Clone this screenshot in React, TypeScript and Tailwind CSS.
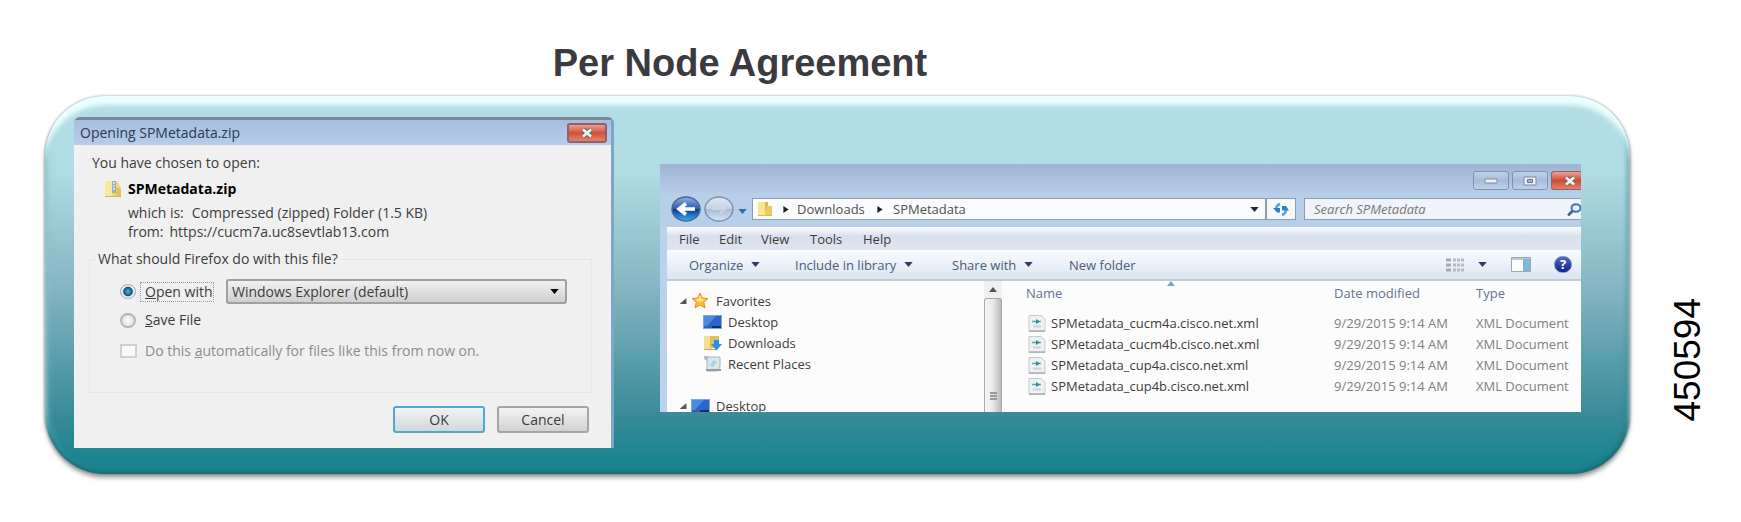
import type { ReactNode } from "react"

const files = [
    "SPMetadata_cucm4a.cisco.net.xml",
    "SPMetadata_cucm4b.cisco.net.xml",
    "SPMetadata_cup4a.cisco.net.xml",
    "SPMetadata_cup4b.cisco.net.xml",
]

const Caret = ({ className = "text-[#2c3f5c]" }: { className?: string }) => (
    <svg width="9" height="5" viewBox="0 0 10 6" className={className} aria-hidden="true">
        <path d="M0 0h10L5 6z" fill="currentColor" />
    </svg>
)

const Crumb = () => (
    <svg width="6" height="7" viewBox="0 0 6 8" aria-hidden="true">
        <path d="M0 0v8l6-4z" fill="#222" />
    </svg>
)

const Expanded = () => (
    <svg width="8" height="6" viewBox="0 0 8 7" aria-hidden="true">
        <path d="M8 0v7H0z" fill="#555" />
    </svg>
)

const CloseX = () => (
    <svg width="14" height="10" viewBox="0 0 14 10" aria-hidden="true">
        <path d="M3 1.5l8 7M11 1.5l-8 7" stroke="#7b6a6e" strokeWidth="5" />
        <path d="M3 1.5l8 7M11 1.5l-8 7" stroke="#f4f4f4" strokeWidth="2.6" />
    </svg>
)

const ZipIcon = () => (
    <svg width="18" height="18" viewBox="0 0 18 18" aria-hidden="true">
        <path d="M1 1h12l4 7v9H1z" fill="#efd77f" />
        <path d="M1 1h7v16H1z" fill="#f8e9a0" />
        <path d="M8 1h4v12H8z" fill="#a4adb4" />
        <path d="M9 3h2M9 6h2M9 9h2" stroke="#e8edf2" strokeWidth="1.5" />
        <path d="M12 8h5v9h-5z" fill="#e3c15c" />
        <path d="M1 16.5h16" stroke="#d6b452" />
    </svg>
)

const FolderIcon = () => (
    <svg width="16" height="16" viewBox="0 0 16 16" aria-hidden="true">
        <path d="M1 1h8v14H1z" fill="#f8e491" />
        <path d="M8 1h3v10H8z" fill="#d5b860" />
        <path d="M10 5h5v10H8v-4z" fill="#eccb5f" />
        <path d="M1 14.5h14" stroke="#dcbb4b" />
    </svg>
)

const DesktopIcon = () => (
    <svg width="19" height="14" viewBox="0 0 19 14" aria-hidden="true">
        <path d="M0 0h19v14H0z" fill="#7ba7d9" />
        <path d="M1 1h17v10H1z" fill="#2b66c8" />
        <path d="M1 1h12L4 11H1z" fill="#4b8be4" />
        <path d="M1 11h17v2H1z" fill="#2f62b0" />
        <path d="M9 11h9v2H9z" fill="#16305e" />
    </svg>
)

const StarIcon = () => (
    <svg width="18" height="17" viewBox="0 0 18 17" aria-hidden="true">
        <path d="M9 1l2.3 5 5.7.6-4.3 3.7 1.4 5.7L9 13l-5.100 3 1.400-5.700L1 6.600l5.700-.6z" fill="#fbc02e" stroke="#f08a24" />
        <path d="M9 3.500l1.500 3.500 3.500.500-5 2.500-4.500-2.500 3-.500z" fill="#ffe98a" />
    </svg>
)

const DownloadsIcon = () => (
    <svg width="19" height="16" viewBox="0 0 19 16" aria-hidden="true">
        <path d="M1 1h8v14H1z" fill="#f5df8c" />
        <path d="M7 1h9v12H7z" fill="#dcbf66" />
        <path d="M1 14.500h12" stroke="#cdaa45" />
        <path d="M11 5h5v4h3l-5.500 6.500L8 9h3z" fill="#2e8fdc" />
    </svg>
)

const RecentIcon = () => (
    <svg width="19" height="17" viewBox="0 0 19 17" aria-hidden="true">
        <path d="M1 1h4l2 3v4L1 4z" fill="#b8bfc6" />
        <path d="M4 2h13v10l-3 4H4z" fill="#dde5ea" stroke="#aab3bb" />
        <path d="M7 10l4-5 3 2-4 5z" fill="#9ad3ec" />
        <path d="M3 15h15" stroke="#929aa2" strokeWidth="2" />
    </svg>
)

const XmlIcon = () => (
    <svg width="18" height="17" viewBox="0 0 18 17" aria-hidden="true">
        <path d="M1 .5h12l4 3.500v12.500H1z" fill="#eef1f2" stroke="#c5cacd" />
        <path d="M1 16h16" stroke="#a9aeb1" strokeWidth="1.500" />
        <path d="M4 6.500h9" stroke="#5fa9ad" strokeWidth="1.500" />
        <path d="M8 4l4 2.500L8 9z" fill="#2b8f96" />
        <path d="M5 11.500h8" stroke="#ccd2d5" strokeWidth="2" />
    </svg>
)

const BackIcon = () => (
    <svg width="30" height="26" viewBox="0 0 30 26" aria-hidden="true">
        <defs>
            <linearGradient id="back" x1="0" y1="0" x2="0" y2="1">
                <stop offset="0" stopColor="#8fb2e4" />
                <stop offset=".48" stopColor="#2c5cb4" />
                <stop offset=".52" stopColor="#0d3b94" />
                <stop offset="1" stopColor="#35b4f4" />
            </linearGradient>
        </defs>
        <ellipse cx="15" cy="13" rx="14" ry="12" fill="url(#back)" stroke="#4a6590" strokeWidth="1.500" />
        <path d="M24 13H10M15 7.500L8 13l7 5.500" fill="none" stroke="#fff" strokeWidth="3.500" />
    </svg>
)

const ForwardIcon = () => (
    <svg width="30" height="26" viewBox="0 0 30 26" aria-hidden="true">
        <defs>
            <linearGradient id="forward" x1="0" y1="0" x2="0" y2="1">
                <stop offset="0" stopColor="#dfe8f3" />
                <stop offset=".5" stopColor="#c3d1e3" />
                <stop offset=".52" stopColor="#a9bcd5" />
                <stop offset="1" stopColor="#d8e5f3" />
            </linearGradient>
        </defs>
        <ellipse cx="15" cy="13" rx="14" ry="12" fill="url(#forward)" stroke="#7e90aa" strokeWidth="1.500" />
        <path d="M8 13h12M16 9l5 4-5 4" fill="none" stroke="#cbd8e8" strokeWidth="2" />
    </svg>
)

const DialogButton = ({ children, primary }: { children: ReactNode; primary?: boolean }) => (
    <button
        className={
            primary
                ? "h-[27px] w-[92px] rounded-[3px] border-2 border-[#4fa9cf] bg-linear-to-b from-[#f1f3f4] to-[#d3d7d9]"
                : "h-[27px] w-[92px] rounded-[3px] border-2 border-[#a5a5a5] bg-linear-to-b from-[#f3f3f3] to-[#d2d2d2]"
        }
    >
        <span className="block leading-5">{children}</span>
    </button>
)

const OpeningDialog = () => {
    return (
        <section className="w-[540px] shrink-0 rounded-t-md border-t-[3px] border-r-[3px] border-t-[#7c8792] border-r-[#79a9c6] bg-[#f0f0f0] text-sm leading-5 text-[#3c3c3c]">
            <header className="flex h-[25px] items-center justify-between bg-linear-to-b from-[#a6bddb] to-[#b7cdea] pr-1 pl-1.5">
                <h2 className="text-[#2c3950]">Opening SPMetadata.zip</h2>
                <button aria-label="Close" className="flex h-5 w-10 items-center justify-center rounded-[3px] border-2 border-[#93606a] bg-linear-to-b from-[#e8a093] via-[#d0513a] to-[#dd8568]">
                    <CloseX />
                </button>
            </header>
            <div className="px-[15px] pt-2 pb-[15px]">
                <p className="pl-[3px]">You have chosen to open:</p>
                <div className="mt-1 flex h-6 items-center gap-1.5 pl-[15px]">
                    <ZipIcon />
                    <strong className="text-black">SPMetadata.zip</strong>
                </div>
                <div className="mt-0.5 pl-[39px] leading-[19px]">
                    <p className="flex gap-2"><span>which is:</span><span>Compressed (zipped) Folder (1.5 KB)</span></p>
                    <p className="flex gap-1.5"><span>from:</span><span>https://cucm7a.uc8sevtlab13.com</span></p>
                </div>
                <fieldset className="mt-2 mr-1 border border-[#e6e6e6] pb-[31px] pl-[30px]">
                    <legend className="-ml-6 px-0.5">What should Firefox do with this file?</legend>
                    <div className="mt-2.5 flex h-[25px] items-center">
                        <input type="radio" id="open" name="action" defaultChecked className="h-[15px] w-4 appearance-none rounded-full border border-[#a3adb5] bg-[radial-gradient(circle,#4fb4e8_0,#17517f_45%,#e4eaee_55%)]" />
                        <label htmlFor="open" className="ml-1 w-[74px] border border-dotted border-[#999] pl-1 leading-[18px] whitespace-nowrap"><u>O</u>pen with</label>
                        <div className="relative ml-3 w-[341px]">
                            <select aria-label="Application" className="block h-[25px] w-full appearance-none rounded-[3px] border-2 border-[#a0a0a0] bg-linear-to-b from-[#f1f1f1] to-[#cfcfcf] pl-1 leading-5">
                                <option>Windows Explorer (default)</option>
                            </select>
                            <span className="pointer-events-none absolute inset-y-0 right-2 flex items-center"><Caret className="text-black" /></span>
                        </div>
                    </div>
                    <div className="mt-1.5 flex items-center">
                        <input type="radio" id="save" name="action" className="h-[15px] w-4 appearance-none rounded-full border-2 border-[#b5b5b5] bg-[radial-gradient(circle,#fff,#d5d5d5)]" />
                        <label htmlFor="save" className="pl-[9px]"><u>S</u>ave File</label>
                    </div>
                    <div className="mt-[11px] flex items-center text-[#8c8c8c]">
                        <input type="checkbox" id="auto" disabled className="h-3.5 w-[17px] appearance-none border-2 border-[#d0d0d0] bg-[#f9f9f9]" />
                        <label htmlFor="auto" className="pl-2">Do this <u>a</u>utomatically for files like this from now on.</label>
                    </div>
                </fieldset>
                <div className="mt-[13px] mr-[7px] flex justify-end gap-3">
                    <DialogButton primary>OK</DialogButton>
                    <DialogButton>Cancel</DialogButton>
                </div>
            </div>
        </section>
    )
}

const AddressBar = () => (
    <div className="flex h-[31px] items-start">
        <button aria-label="Back"><BackIcon /></button>
        <button aria-label="Forward" className="ml-[3px]"><ForwardIcon /></button>
        <button aria-label="Recent pages" className="ml-1 self-center"><Caret className="text-[#2f6fa8]" /></button>
        <nav className="mt-0.5 ml-[5px] flex h-[22px] flex-1 items-center border border-[#8e9db0] bg-[#fafbfc] pl-1 text-[#505050]">
            <FolderIcon />
            <span className="ml-2.5"><Crumb /></span>
            <a href="#downloads" className="ml-2 w-[76px]">Downloads</a>
            <span className="ml-1"><Crumb /></span>
            <a href="#spmetadata" className="ml-2.5">SPMetadata</a>
            <button aria-label="Previous locations" className="mr-1.5 ml-auto"><Caret className="text-[#232342]" /></button>
        </nav>
        <button aria-label="Refresh" className="mt-0.5 flex h-[22px] w-[30px] items-center justify-center border border-[#8e9db0] bg-[#f5f8fb]">
            <svg width="18" height="14" viewBox="0 0 18 14" aria-hidden="true">
                <path d="M4 8c0-3 1-5 4-6M14 7c0 3-1 5-4 6" fill="none" stroke="#5ba0d4" strokeWidth="2.500" />
                <path d="M1 6h7v4.500H5zM10 8.500h7L14 4h-4z" fill="#357fc0" />
            </svg>
        </button>
        <div className="mt-0.5 ml-2 flex h-[22px] w-[277px] items-center border border-r-0 border-[#8e9db0] bg-[#f0f3f8]">
            <input aria-label="Search" placeholder="Search SPMetadata" className="min-w-0 flex-1 pl-[9px] italic outline-none placeholder:text-[#777]" />
            <svg width="14" height="13" viewBox="0 0 14 13" aria-hidden="true">
                <ellipse cx="9" cy="5" rx="4.500" ry="3.800" fill="#e3f0fa" stroke="#3c78b5" strokeWidth="2" />
                <path d="M5.500 8L1 12.500" stroke="#3c5f95" strokeWidth="2.500" />
            </svg>
        </div>
    </div>
)

const Explorer = () => {
    return (
        <section className="mt-[47px] flex h-[248px] min-w-0 flex-1 flex-col overflow-hidden bg-[#bcd2ec] pl-[7px] text-[13px] leading-5 text-[#3c3c3c]">
            <div className="-ml-[7px] bg-linear-to-b from-[#9fb4d1] to-[#b8cfea] to-50% pl-[11px]">
                <div className="flex h-8 justify-end gap-[3px] pt-[7px]">
                    <button aria-label="Minimize" className="flex h-[19px] w-9 items-center justify-center rounded-[3px] border border-[#7f94b0] bg-linear-to-b from-[#c0d2e8] via-[#a5bddb] to-[#bcd2ea]">
                        <svg width="14" height="6" viewBox="0 0 14 6" aria-hidden="true"><path d="M1 1h12v4H1z" fill="#eef2f6" stroke="#7c899b" /></svg>
                    </button>
                    <button aria-label="Maximize" className="flex h-[19px] w-9 items-center justify-center rounded-[3px] border border-[#7f94b0] bg-linear-to-b from-[#c0d2e8] via-[#a5bddb] to-[#bcd2ea]">
                        <svg width="14" height="10" viewBox="0 0 14 10" aria-hidden="true">
                            <path d="M1 1h12v8H1z" fill="#eef2f6" stroke="#7c899b" />
                            <path d="M4.500 3.500h5v3h-5z" fill="#9db6d3" stroke="#66758b" />
                        </svg>
                    </button>
                    <button aria-label="Close window" className="flex h-[19px] w-[30px] items-center justify-center rounded-l-[3px] border border-r-0 border-[#93606a] bg-linear-to-b from-[#e8a093] via-[#cc4a34] to-[#dd8568] pl-1.5">
                        <CloseX />
                    </button>
                </div>
                <AddressBar />
            </div>
            <div className="flex h-[23px] shrink-0 items-center bg-linear-to-b from-white via-[#d9e0ec] via-40% to-[#dfe4f0] pl-3">
                <button className="w-10 text-left">File</button>
                <button className="w-[42px] text-left">Edit</button>
                <button className="w-[49px] text-left">View</button>
                <button className="w-[53px] text-left">Tools</button>
                <button>Help</button>
            </div>
            <div className="flex h-[31px] shrink-0 items-center border-b-2 border-[#c0ccda] bg-linear-to-b from-[#fafcfe] via-[#eaf1f9] to-[#dbe5f0] pl-[22px] text-[#4c5b76]">
                <button className="flex w-[106px] items-center gap-2">Organize <Caret /></button>
                <button className="flex w-[157px] items-center gap-2">Include in library <Caret /></button>
                <button className="flex w-[117px] items-center gap-2">Share with <Caret /></button>
                <button>New folder</button>
                <button aria-label="Change view" className="ml-auto flex items-center gap-3.5">
                    <svg width="18" height="14" viewBox="0 0 18 14" aria-hidden="true">
                        <path d="M0 2h5M0 7h5M0 12h5" stroke="#a3aab3" strokeWidth="3" />
                        <path d="M7 2h11M7 7h11M7 12h11" stroke="#b4bbc4" strokeWidth="3" strokeDasharray="3 1" />
                    </svg>
                    <Caret />
                </button>
                <button aria-label="Preview pane" className="ml-6">
                    <svg width="20" height="15" viewBox="0 0 20 15" aria-hidden="true">
                        <path d="M.5 .5h19v14H.5z" fill="#fff" stroke="#9aa7b6" />
                        <path d="M1 1h18v2H1z" fill="#b9c6d4" />
                        <path d="M12 2h7v12h-7z" fill="#7db9d8" />
                    </svg>
                </button>
                <button aria-label="Help" className="mr-[9px] ml-[23px] flex h-[17px] w-[18px] items-center justify-center rounded-full border border-[#7185b5] bg-linear-to-b from-[#5069c0] to-[#0d1f8c] leading-none font-bold text-white">?</button>
            </div>
            <div className="flex flex-1 bg-[#fcfcfc]">
                <nav className="w-[317px] shrink-0 pt-[9px] pl-3">
                    <a href="#favorites" className="flex h-[21px] items-center gap-1"><Expanded /><StarIcon /><span className="pl-[3px]">Favorites</span></a>
                    <a href="#desktop" className="flex h-[21px] items-center gap-1.5 pl-6"><DesktopIcon />Desktop</a>
                    <a href="#downloads" className="flex h-[21px] items-center gap-1.5 pl-6"><DownloadsIcon />Downloads</a>
                    <a href="#recent" className="flex h-[21px] items-center gap-1.5 pl-6"><RecentIcon />Recent Places</a>
                    <a href="#computer" className="mt-[21px] flex h-[21px] items-center gap-1"><Expanded /><DesktopIcon /><span className="pl-0.5">Desktop</span></a>
                </nav>
                <div className="flex w-[18px] shrink-0 flex-col items-center bg-[#f0f0f0]">
                    <svg width="8" height="5" viewBox="0 0 8 5" className="my-[6px]" aria-hidden="true"><path d="M0 5h8L4 0z" fill="#555" /></svg>
                    <div className="flex w-full flex-1 flex-col items-center justify-end gap-px rounded-t-[3px] border border-b-0 border-[#aaa] bg-linear-to-r from-[#f5f5f5] via-[#e8e8e8] to-[#b9b9b9] pb-4">
                        <i className="h-0.5 w-[7px] bg-[#999]" />
                        <i className="h-0.5 w-[7px] bg-[#999]" />
                        <i className="h-0.5 w-[7px] bg-[#999]" />
                    </div>
                </div>
                <div className="relative min-w-0 flex-1">
                    <svg width="8" height="5" viewBox="0 0 8 5" className="absolute top-0 left-[165px]" aria-hidden="true"><path d="M0 5h8L4 0z" fill="#7ba3c4" /></svg>
                    <table className="w-full table-fixed text-left whitespace-nowrap">
                        <thead className="text-[#64748f]">
                            <tr className="h-8 align-top leading-6">
                                <th className="pl-6 font-normal">Name</th>
                                <th className="w-[142px] pl-2 font-normal">Date modified</th>
                                <th className="w-[113px] pl-2 font-normal">Type</th>
                            </tr>
                        </thead>
                        <tbody className="text-[#808080]">
                            {files.map((file) => (
                                <tr key={file} className="h-[21px] leading-[21px]">
                                    <td className="pl-[26px] text-[#3c3c3c]"><span className="flex items-center gap-[5px]"><XmlIcon />{file}</span></td>
                                    <td className="pl-2">9/29/2015 9:14 AM</td>
                                    <td className="pl-2">XML Document</td>
                                </tr>
                            ))}
                        </tbody>
                    </table>
                </div>
            </div>
        </section>
    )
}

const App = () => {
    return (
        <main className="flex bg-white pt-[41px] pb-12 pl-[45px] font-['Open_Sans',sans-serif]">
            <div className="min-w-0 flex-1">
                <h1 className="mr-[195px] text-center font-['Liberation_Sans',sans-serif] text-[38px] leading-[44px] font-bold text-[#3b3b3f]">Per Node Agreement</h1>
                <div className="mt-[11px] flex items-start gap-[46px] rounded-[60px] bg-[linear-gradient(#b2dfe6,#b0dce3_20%,#86b6c3_50%,#3a8b98_84%,#1b858f_96%)] pt-[21px] pr-[49px] pb-[26px] pl-[29px] shadow-[0_4px_4px_rgba(0,0,0,0.35),0_0_3px_rgba(0,0,0,0.4),inset_0_9px_5px_#ecffff,inset_0_-3px_4px_#166972,inset_3px_0_6px_rgba(120,200,215,0.5),inset_-3px_0_5px_rgba(40,110,125,0.5)]">
                    <OpeningDialog />
                    <Explorer />
                </div>
            </div>
            <p className="w-[111px] shrink-0 self-end pr-8 pb-[53px]">
                <span className="ml-auto block w-[42px] rotate-180 font-['Liberation_Sans',sans-serif] text-[37px] leading-[42px] text-black [writing-mode:vertical-rl]">450594</span>
            </p>
        </main>
    )
}

export default App
